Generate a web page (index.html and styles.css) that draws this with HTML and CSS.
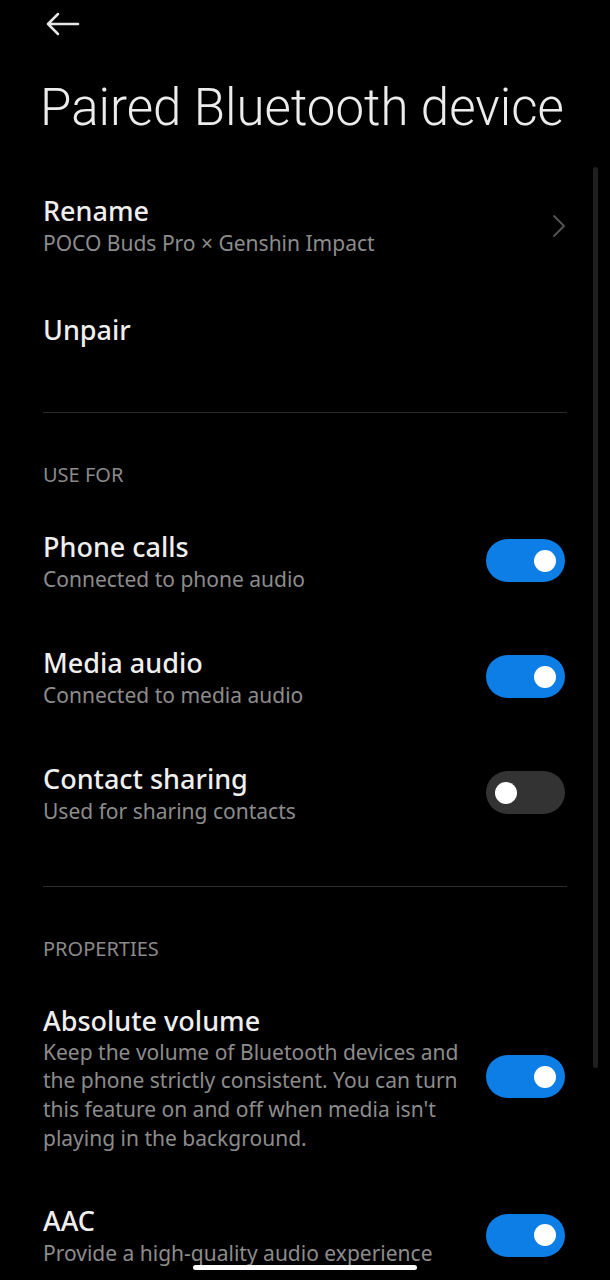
FILE: index.html
```html
<!DOCTYPE html>
<html lang="en">
<head>
<meta charset="utf-8">
<title>Paired Bluetooth device</title>
<link rel="stylesheet" href="styles.css">
</head>
<body>
<div class="screen">
  <header class="topbar">
    <svg class="back" width="36" height="24" viewBox="0 0 36 24" aria-label="Back">
      <path d="M3 12 H33 M13 2 L3 12 L13 22" fill="none" stroke="#e6e6e6" stroke-width="2.5" stroke-linecap="round" stroke-linejoin="round"/>
    </svg>
  </header>
  <h1 class="title">Paired Bluetooth device</h1>

  <section class="group top">
    <div class="row">
      <div class="text">
        <div class="label">Rename</div>
        <div class="sub">POCO Buds Pro × Genshin Impact</div>
      </div>
      <svg class="chev" width="14" height="24" viewBox="0 0 14 24"><path d="M2 2 L12 12 L2 22" fill="none" stroke="#555" stroke-width="1.8" stroke-linecap="round" stroke-linejoin="round"/></svg>
    </div>
    <div class="row single">
      <div class="text"><div class="label">Unpair</div></div>
    </div>
  </section>

  <div class="divider"></div>

  <section class="group">
    <div class="section-head">USE FOR</div>
    <div class="row">
      <div class="text">
        <div class="label">Phone calls</div>
        <div class="sub">Connected to phone audio</div>
      </div>
      <div class="toggle on"><span class="knob"></span></div>
    </div>
    <div class="row">
      <div class="text">
        <div class="label">Media audio</div>
        <div class="sub">Connected to media audio</div>
      </div>
      <div class="toggle on"><span class="knob"></span></div>
    </div>
    <div class="row">
      <div class="text">
        <div class="label">Contact sharing</div>
        <div class="sub">Used for sharing contacts</div>
      </div>
      <div class="toggle"><span class="knob"></span></div>
    </div>
  </section>

  <div class="divider"></div>

  <section class="group">
    <div class="section-head">PROPERTIES</div>
    <div class="row">
      <div class="text">
        <div class="label">Absolute volume</div>
        <div class="sub desc">Keep the volume of Bluetooth devices and the phone strictly consistent. You can turn this feature on and off when media isn't playing in the background.</div>
      </div>
      <div class="toggle on"><span class="knob"></span></div>
    </div>
    <div class="row">
      <div class="text">
        <div class="label">AAC</div>
        <div class="sub">Provide a high-quality audio experience</div>
      </div>
      <div class="toggle on"><span class="knob"></span></div>
    </div>
  </section>

  <div class="scrollbar"></div>
  <div class="home-indicator"></div>
</div>
</body>
</html>
```

FILE: styles.css
```css
html, body {
  margin: 0;
  padding: 0;
  background: #000;
}
body {
  font-family: "Noto Sans", Roboto, sans-serif;
  color: #f0f0f0;
}
.screen {
  position: relative;
  width: 610px;
  height: 1280px;
  overflow: hidden;
  box-sizing: border-box;
  padding: 0 43px 0 43px;
}
.topbar {
  height: 48px;
  display: flex;
  align-items: center;
}
.back {
  display: block;
  margin-left: 2px;
}
.title {
  margin: 28px 0 0 -3px;
  font-family: Roboto, "Noto Sans", sans-serif;
  font-weight: 300;
  font-size: 51px;
  line-height: 64px;
  color: #ececec;
}
.group {
  display: flex;
  flex-direction: column;
  padding-bottom: 34.5px;
}
.group.top {
  padding-top: 27.5px;
  padding-bottom: 36px;
}
.row {
  display: flex;
  align-items: center;
  justify-content: space-between;
  gap: 24px;
  padding: 26px 0;
}
.row.single {
  padding: 29.5px 0 29px;
}
.text {
  display: flex;
  flex-direction: column;
  flex: 1;
  min-width: 0;
}
.label {
  font-size: 27px;
  line-height: 34px;
  font-weight: 500;
  color: #efefef;
}
.sub {
  font-size: 21px;
  line-height: 30px;
  color: #8c8c8c;
}
.desc {
  line-height: 28.7px;
}
.chev {
  display: block;
  flex: none;
  margin-right: 1px;
}
.divider {
  height: 1px;
  background: #2b2b2b;
}
.section-head {
  margin-top: 48px;
  margin-bottom: 14.5px;
  font-size: 20px;
  line-height: 28px;
  color: #8a8a8a;
}
.toggle {
  flex: none;
  width: 79px;
  height: 43px;
  border-radius: 22px;
  background: #333;
  display: flex;
  align-items: center;
  padding: 0 9px;
  box-sizing: border-box;
  margin-right: 2px;
  margin-top: -2px;
}
.toggle.on {
  background: #0d7ee6;
  justify-content: flex-end;
}
.knob {
  width: 22px;
  height: 22px;
  border-radius: 50%;
  background: #fff;
}
.scrollbar {
  position: absolute;
  left: 593px;
  top: 167px;
  width: 5px;
  height: 901px;
  border-radius: 3px;
  background: #1f1f1f;
}
.home-indicator {
  position: absolute;
  left: 193px;
  top: 1265px;
  width: 224px;
  height: 5px;
  border-radius: 3px;
  background: #fff;
}
```
